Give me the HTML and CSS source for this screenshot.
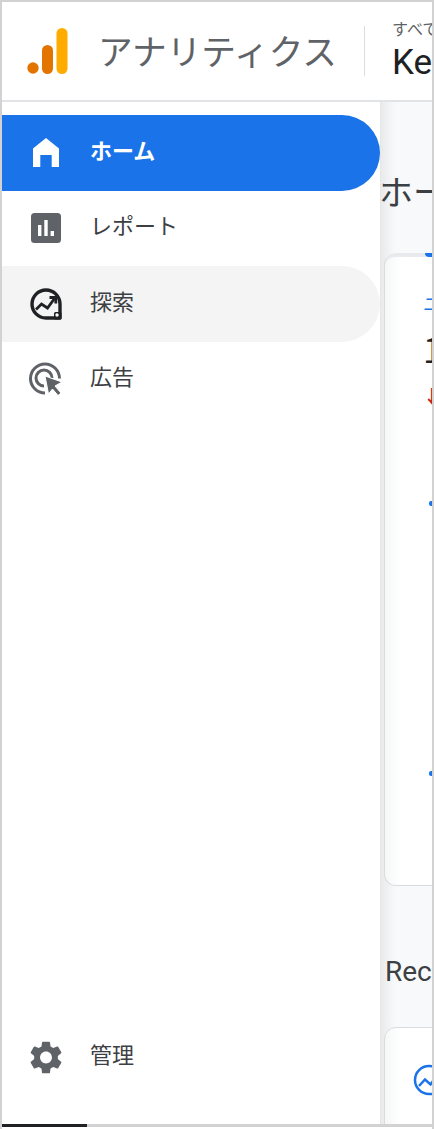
FILE: index.html
```html
<!DOCTYPE html>
<html lang="ja">
<head>
  <meta charset="UTF-8" />
  <meta name="viewport" content="width=device-width, initial-scale=1" />
  <title>アナリティクス</title>
  <link rel="stylesheet" href="styles.css">
</head>
<body>
  <div class="frame">
    <header class="topbar">
      <svg class="logo" width="41" height="47" viewBox="0 0 41 47">
        <rect x="29.5" y="0" width="11" height="46" rx="5.5" fill="#ffab00"/>
        <rect x="15" y="17" width="11" height="29" rx="5.5" fill="#e37400"/>
        <circle cx="6" cy="40" r="5.7" fill="#e37400"/>
      </svg>
      <div class="brand">アナリティクス</div>
      <div class="account">
        <div class="account-label">すべてのアカウント</div>
        <div class="account-name">Keyword Analytics</div>
      </div>
    </header>

    <div class="body">
      <nav class="sidebar">
        <a class="nav-item active">
          <span class="nav-icon">
            <svg width="26" height="29" viewBox="0 0 26 29"><path d="M13 0 26 10.5V29H18.7V17H7.3V29H0V10.5Z" fill="#fff"/></svg>
          </span>
          <span class="nav-label">ホーム</span>
        </a>
        <a class="nav-item">
          <span class="nav-icon">
            <svg width="30" height="30" viewBox="0 0 30 30">
              <rect width="30" height="30" rx="3.5" fill="#5f6368"/>
              <rect x="7" y="12" width="3.4" height="11" fill="#fff"/>
              <rect x="13.3" y="7" width="3.4" height="16" fill="#fff"/>
              <rect x="19.6" y="18" width="3.4" height="5" fill="#fff"/>
            </svg>
          </span>
          <span class="nav-label">レポート</span>
        </a>
        <a class="nav-item hovered">
          <span class="nav-icon">
            <svg width="32" height="32" viewBox="0 0 32 32" fill="none" stroke="#202124">
              <path d="M30 30H16A14 14 0 1 1 30 16Z" stroke-width="3.400" stroke-linejoin="round"/>
              <rect x="24" y="24" width="7.500" height="7.500" rx="1.500" fill="#202124" stroke="none"/>
              <path d="M6 21.500 11.500 16 17.500 20 24.500 10.500" stroke-width="2.800"/>
              <path d="M19.500 9.500H25.800V15.500" stroke-width="2.800"/>
              <circle cx="27" cy="27" r="1.700" fill="#fff" stroke="none"/>
            </svg>
          </span>
          <span class="nav-label">探索</span>
        </a>
        <a class="nav-item">
          <span class="nav-icon">
            <svg width="34" height="34" viewBox="0 0 34 34" fill="none" stroke="#5f6368" stroke-width="3">
              <path d="M16 31A14.500 14.500 0 1 1 30.500 16.500"/>
              <path d="M15 24A8 8 0 1 1 23 16"/>
              <path d="M16 14 33 20 26 24 32 31 29 33.500 23.500 27 19.500 32Z" fill="#5f6368" stroke="#fff" stroke-width="1"/>
            </svg>
          </span>
          <span class="nav-label">広告</span>
        </a>
        <a class="nav-item admin">
          <span class="nav-icon">
            <svg width="32" height="33" viewBox="2.500 2 19 20"><path fill="#5f6368" d="M19.14 12.94c.04-.3.06-.61.06-.94 0-.32-.02-.64-.07-.94l2.03-1.58c.18-.14.23-.41.12-.61l-1.92-3.32c-.12-.22-.37-.29-.59-.22l-2.39.96c-.5-.38-1.03-.7-1.62-.94l-.36-2.54c-.04-.24-.24-.41-.48-.41h-3.84c-.24 0-.43.17-.47.41l-.36 2.54c-.59.24-1.13.57-1.62.94l-2.39-.96c-.22-.08-.47 0-.59.22L2.74 8.87c-.12.21-.08.47.12.61l2.03 1.58c-.05.3-.09.63-.09.94s.02.64.07.94l-2.03 1.58c-.18.14-.23.41-.12.61l1.92 3.32c.12.22.37.29.59.22l2.39-.96c.5.38 1.03.7 1.62.94l.36 2.54c.05.24.24.41.48.41h3.84c.24 0 .44-.17.47-.41l.36-2.54c.59-.24 1.13-.56 1.62-.94l2.39.96c.22.08.47 0 .59-.22l1.92-3.32c.12-.22.07-.47-.12-.61l-2.01-1.58zM12 15.6c-1.98 0-3.6-1.62-3.6-3.6s1.62-3.6 3.6-3.6 3.6 1.62 3.6 3.6-1.62 3.6-3.6 3.6z"/></svg>
          </span>
          <span class="nav-label">管理</span>
        </a>
      </nav>

      <main class="content">
        <h1 class="page-title">ホーム</h1>
        <section class="card overview">
          <div class="card-marker"></div>
          <div class="metric-label">ユーザー</div>
          <div class="metric-value">1.2万</div>
          <div class="metric-change">↓ 3.1%</div>
          <div class="tick first"></div>
          <div class="tick second"></div>
        </section>
        <h2 class="section-title">Recently accessed</h2>
        <section class="card recent">
          <svg width="32" height="32" viewBox="0 0 32 32" fill="none" stroke="#1a73e8" stroke-width="2.500">
            <path d="M30 30H16A14 14 0 1 1 30 16Z"/>
            <path d="M6 22 12 15.500 17.500 20.500 25 10"/>
          </svg>
        </section>
      </main>
    </div>

    <div class="scrollbar"><div class="scrollbar-thumb"></div></div>
  </div>
</body>
</html>
```

FILE: styles.css
```css
* {
  box-sizing: border-box;
}

body {
  margin: 0;
  background: #fff;
  font-family: "Noto Sans CJK JP", "Noto Sans", sans-serif;
}

.frame {
  width: 434px;
  height: 1129px;
  border: 2px solid #d2d2d2;
  border-bottom: none;
  display: flex;
  flex-direction: column;
  overflow: hidden;
}

.topbar {
  height: 100px;
  flex: none;
  display: flex;
  align-items: center;
  border-bottom: 2px solid #e2e3e6;
  overflow: hidden;
}

.logo {
  flex: none;
  margin-left: 25px;
  margin-top: 1px;
}

.brand {
  flex: none;
  margin-left: 30px;
  margin-top: -3px;
  font-size: 34.700px;
  color: #5f6368;
  white-space: nowrap;
}

.account {
  flex: none;
  height: 50px;
  margin-left: 27px;
  padding-left: 27px;
  border-left: 1px solid #dadce0;
  white-space: nowrap;
}

.account-label {
  font-size: 16px;
  line-height: 18px;
  margin-top: -7px;
  color: #5f6368;
}

.account-name {
  font-family: Roboto, sans-serif;
  font-size: 35px;
  line-height: 38px;
  margin-top: 7px;
  color: #202124;
}

.body {
  flex: 1;
  min-height: 0;
  display: flex;
}

.sidebar {
  width: 378px;
  flex: none;
  padding-top: 13px;
  background: #fff;
  display: flex;
  flex-direction: column;
}

.nav-item {
  height: 75.500px;
  flex: none;
  display: flex;
  align-items: center;
  gap: 21px;
  padding-left: 21px;
  border-radius: 0 38px 38px 0;
  font-size: 22px;
  color: #3c4043;
}

.nav-label {
  margin-top: -8px;
}

.nav-item.active {
  background: #1a73e8;
  color: #fff;
  font-weight: 700;
}

.nav-item.hovered {
  background: #f4f4f4;
}

.nav-item.admin {
  margin-top: auto;
  margin-bottom: 29px;
}

.nav-icon {
  width: 46px;
  flex: none;
  display: flex;
  justify-content: center;
}

.content {
  flex: 1;
  min-width: 0;
  overflow: hidden;
  padding-left: 3px;
  background: linear-gradient(90deg, #e9eaeb, #f8f9fa 14px);
  border-left: 1px solid #e6e6e6;
}

.page-title {
  margin: 65px 0 0 -5px;
  font-size: 34px;
  line-height: 48px;
  font-weight: 400;
  color: #3c4043;
  white-space: nowrap;
}

.card {
  width: 600px;
  background: linear-gradient(90deg, #f6f7f7, #fff 16px);
  border: 1px solid #dadce0;
  border-radius: 12px;
}

.overview {
  position: relative;
  height: 633px;
  margin-top: 38px;
  padding: 34px 0 0 38px;
  border-top: 4px solid #e8eaed;
}

.card-marker {
  position: absolute;
  top: -4px;
  left: 40px;
  width: 20px;
  height: 4px;
  border-radius: 0 0 4px 4px;
  background: #1a73e8;
}

.metric-label {
  font-size: 18px;
  line-height: 24px;
  color: #1a73e8;
}

.metric-value {
  font-size: 34px;
  line-height: 44px;
  margin-top: 12px;
  color: #202124;
}

.metric-change {
  font-size: 18px;
  line-height: 24px;
  margin-top: 12px;
  color: #c5221f;
  font-weight: 700;
}

.tick {
  width: 10px;
  height: 5px;
  margin-left: 6px;
  border-radius: 2px;
  background: #1a73e8;
}

.tick.first {
  margin-top: 94px;
}

.tick.second {
  margin-top: 265px;
}

.section-title {
  margin: 66px 0 0 1px;
  font-family: Roboto, sans-serif;
  font-size: 28px;
  line-height: 40px;
  font-weight: 400;
  color: #3c4043;
  white-space: nowrap;
}

.recent {
  height: 200px;
  margin-top: 35px;
  padding: 36px 0 0 28px;
}

.scrollbar {
  height: 3px;
  flex: none;
  margin-bottom: 2px;
  background: #d2d2d2;
}

.scrollbar-thumb {
  width: 85px;
  height: 3px;
  background: #202124;
}
```
